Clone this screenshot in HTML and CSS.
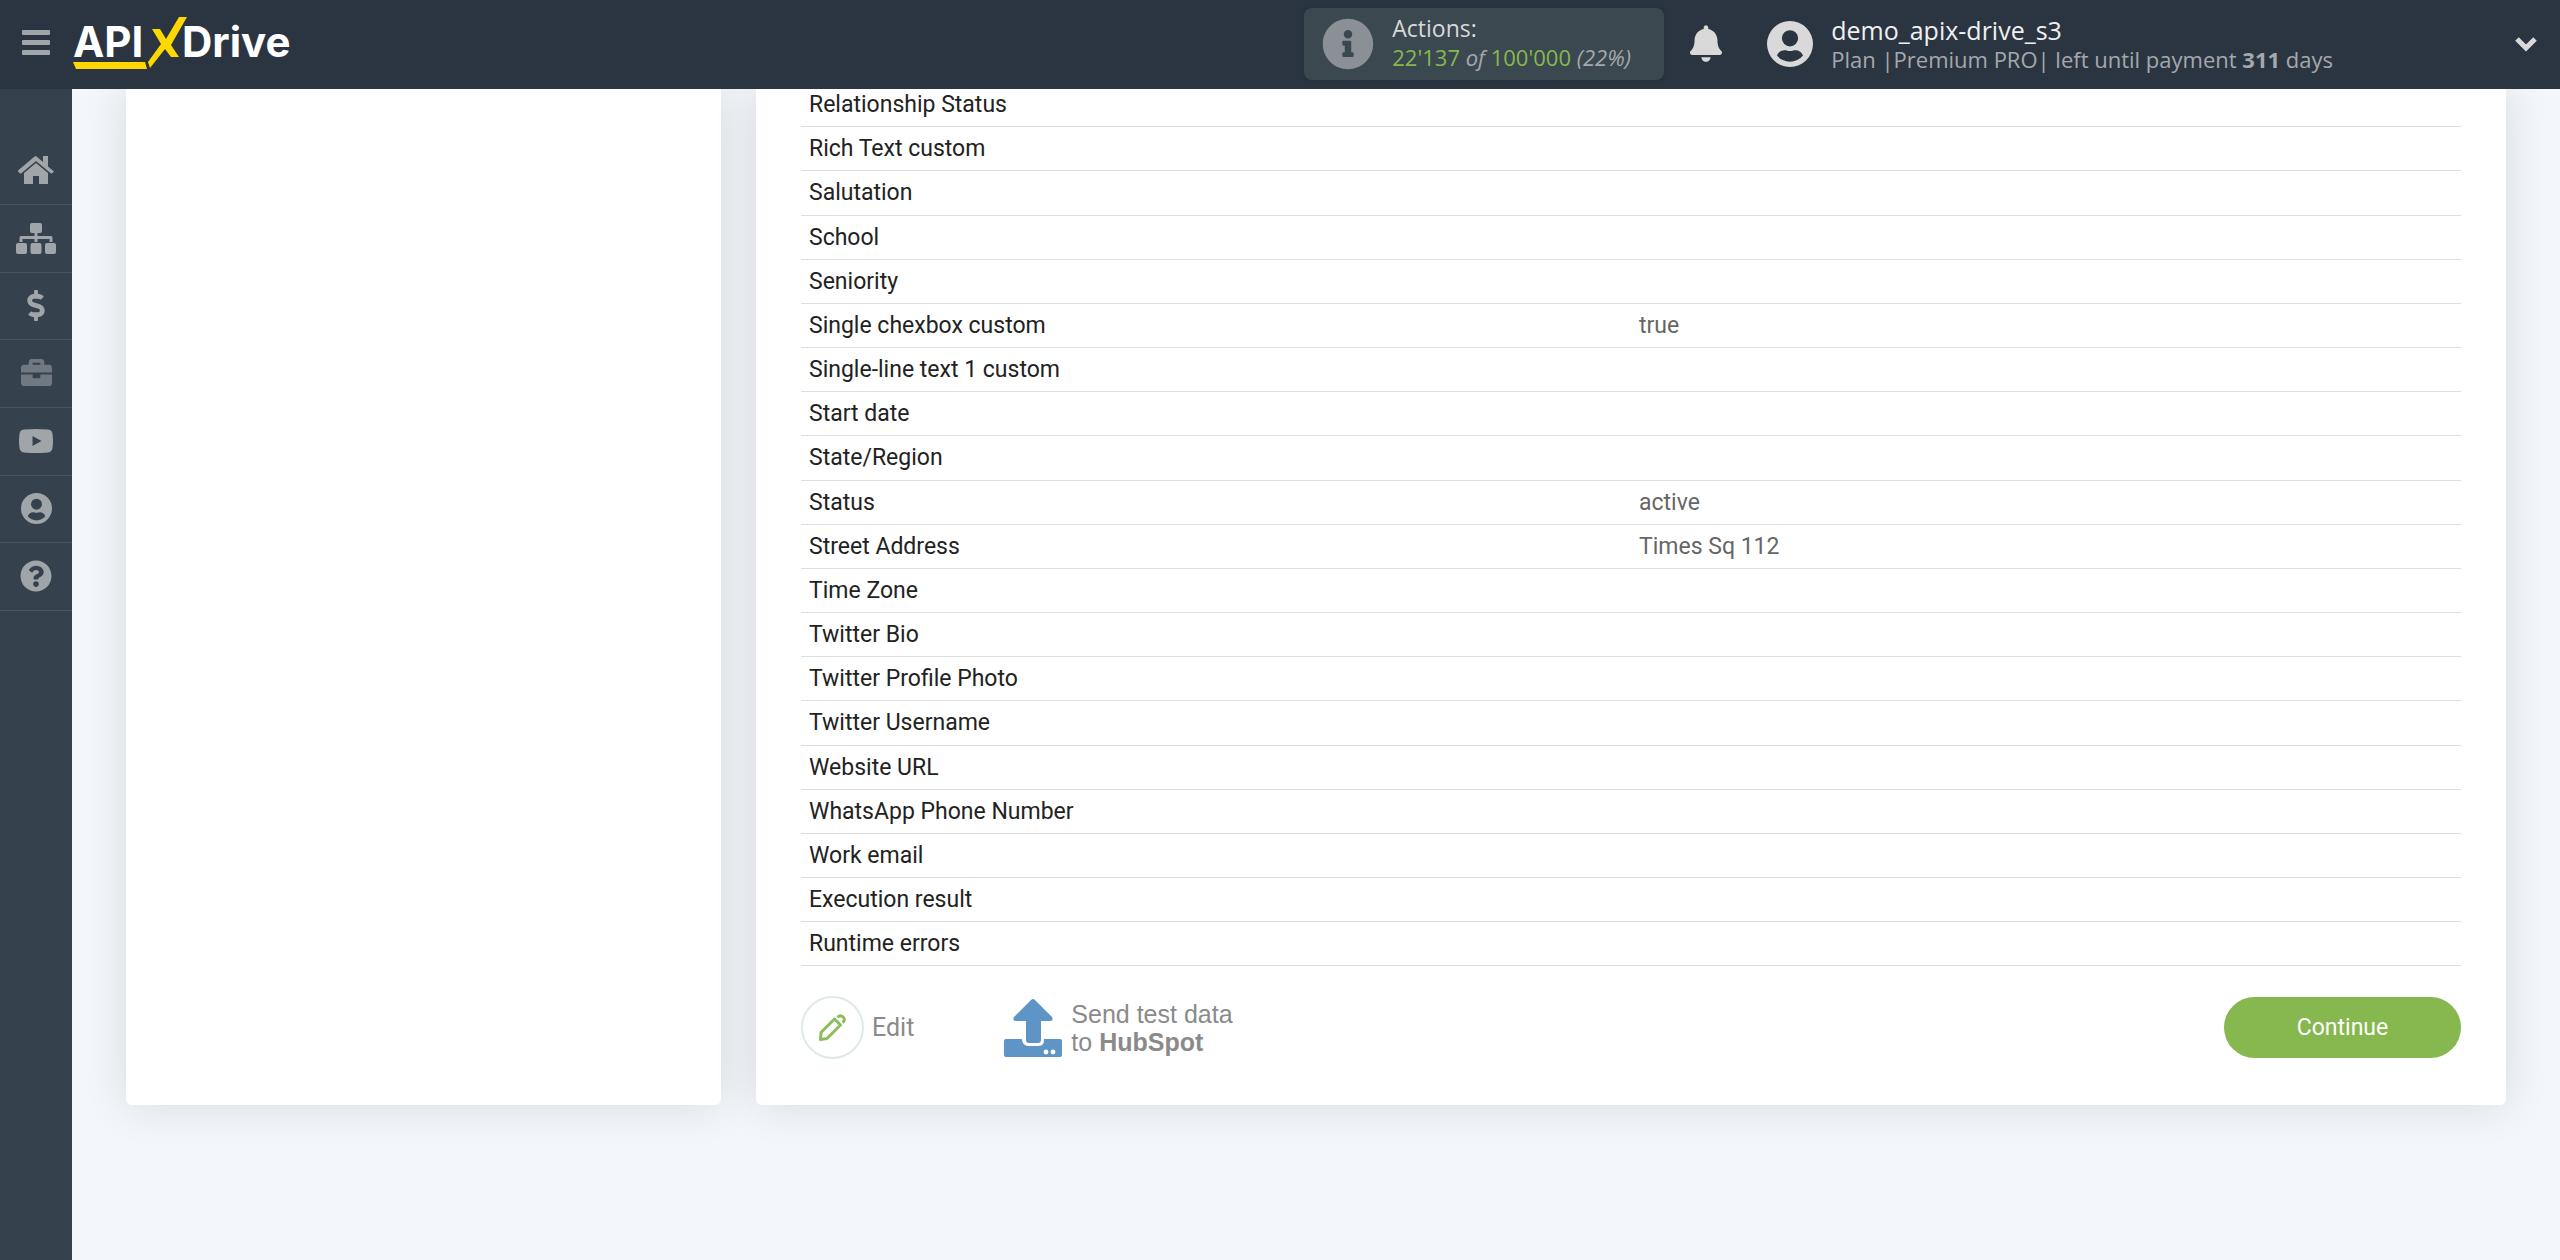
FILE: index.html
```html
<!DOCTYPE html>
<html lang="en">
<head>
<meta charset="utf-8">
<meta name="viewport" content="width=device-width, initial-scale=1">
<title>ApiX-Drive</title>
<link rel="stylesheet" href="styles.css">
</head>
<body>
<header class="topbar">
  <button class="icon-button menu-toggle" type="button" aria-label="Menu">
    <svg width="28" height="25" viewBox="0 0 28 25"><rect width="28" height="5" rx="1"/><rect y="10" width="28" height="5" rx="1"/><rect y="20" width="28" height="5" rx="1"/></svg>
  </button>
  <a class="logo" href="#" aria-label="APIXDrive">
    <svg width="224" height="56" viewBox="0 0 224 56">
      <text class="logo-text" x="0" y="43">API</text>
      <text class="logo-text" x="109" y="43">Drive</text>
      <path class="logo-accent" d="M0 48H72L74 55H3ZM79 15H87L93 25L106 3H114L98 31L106 43H98L92 35L77 54L75 48L88 30Z"/>
    </svg>
  </a>
  <section class="actions-box">
    <svg class="info-icon" width="52" height="52" viewBox="0 0 512 512"><path d="M256 8C119 8 8 119 8 256s111 248 248 248 248-111 248-248S393 8 256 8zm0 110c23.200 0 42 18.800 42 42s-18.800 42-42 42-42-18.800-42-42 18.800-42 42-42zm56 254c0 6.600-5.400 12-12 12h-88c-6.600 0-12-5.400-12-12v-24c0-6.600 5.400-12 12-12h12v-64h-12c-6.600 0-12-5.400-12-12v-24c0-6.600 5.400-12 12-12h64c6.600 0 12 5.400 12 12v100h12c6.600 0 12 5.400 12 12v24z"/></svg>
    <div class="actions-text">
      <div class="title">Actions:</div>
      <div class="detail"><span class="count">22'137</span> <em>of</em> <span class="count">100'000</span> <em>(22%)</em></div>
    </div>
  </section>
  <button class="icon-button bell" type="button" aria-label="Notifications">
    <svg width="32" height="37" viewBox="0 0 448 512"><path d="M224 512c35.320 0 63.970-28.650 63.970-64H160.030c0 35.350 28.650 64 63.970 64zm215.390-149.710c-19.320-20.760-55.470-51.990-55.470-154.290 0-77.700-54.480-139.900-127.940-155.160V32c0-17.670-14.320-32-31.980-32s-31.980 14.330-31.980 32v20.840C118.560 68.100 64.080 130.300 64.080 208c0 102.300-36.150 133.530-55.470 154.290-6 6.450-8.660 14.160-8.610 21.710.11 16.400 12.980 32 32.100 32h383.800c19.120 0 32-15.600 32.100-32 .05-7.550-2.610-15.270-8.610-21.710z"/></svg>
  </button>
  <a class="account" href="#">
    <svg width="46" height="46" viewBox="0 0 30 30"><path fill-rule="evenodd" d="M15 0a15 15 0 1 0 0 30a15 15 0 0 0 0-30ZM15 6a5.300 5.300 0 1 1 0 10.600a5.300 5.300 0 0 1 0-10.600ZM6.500 22.500C7.500 20 9.500 19 11.500 19C13 19 13.500 19.500 15 19.500S17 19 18.500 19C20.500 19 22.500 20 23.500 22.500A11 11 0 0 1 6.500 22.500Z"/></svg>
    <span class="account-text">
      <span class="title">demo_apix-drive_s3</span>
      <span class="detail">Plan |Premium PRO| left until payment <b>311</b> days</span>
    </span>
  </a>
  <button class="icon-button expand" type="button" aria-label="Expand">
    <svg width="24" height="16" viewBox="0 0 24 16"><path d="M3 3L12 12L21 3"/></svg>
  </button>
</header>
<div class="layout">
  <nav class="sidebar" aria-label="Main">
    <a href="#" aria-label="Home"><svg width="36" height="28" viewBox="0 0 36 28"><path d="M18 0L25 6V0H30V10.500L36 15.500L34 17.500L33 17.500L18 5L3 17.500H2L0 15.500L0 14.500L16 1Q18-.5 18 0ZM18 7L30 17V28H21V20H15V28H6V17Z"/></svg></a>
    <a href="#" aria-label="Connections"><svg width="40" height="32" viewBox="0 0 40 32"><rect x="14" y="1" width="12" height="10" rx="2"/><rect y="21" width="11" height="11" rx="2"/><rect x="14.500" y="21" width="11" height="11" rx="2"/><rect x="29" y="21" width="11" height="11" rx="2"/><path d="M18.500 10H21.500V14H35Q36.500 14 36.500 16V20H33.500V17H21.500V20H18.500V17H6.500V20H3.500V16Q3.500 14 5 14H18.500Z"/></svg></a>
    <a href="#" aria-label="Billing"><svg width="18" height="31" viewBox="0 0 288 512"><path d="M209.200 233.400l-108-31.600C88.700 198.200 80 186.500 80 173.500c0-16.300 13.200-29.500 29.500-29.500h66.300c12.200 0 24.200 3.700 34.200 10.500 6.100 4.100 14.300 3.100 19.500-2l34.800-34c7.100-6.900 6.100-18.400-1.800-24.500C238 74.800 207.400 64.100 176 64V16c0-8.800-7.200-16-16-16h-32c-8.800 0-16 7.200-16 16v48h-2.500C45.800 64-5.400 118.700.5 183.600c4.200 46.100 39.400 83.600 83.800 96.600l102.500 30c12.500 3.700 21.200 15.300 21.200 28.300 0 16.300-13.200 29.500-29.500 29.500h-66.300C100 368 88 364.300 78 357.500c-6.100-4.100-14.300-3.100-19.500 2l-34.800 34c-7.100 6.900-6.100 18.400 1.800 24.500 24.500 19.200 55.100 29.900 86.500 30v48c0 8.800 7.200 16 16 16h32c8.800 0 16-7.200 16-16v-48.200c46.600-.9 90.300-28.600 105.700-72.700 21.500-61.600-14.600-124.800-72.500-141.700z"/></svg></a>
    <a class="dim" href="#" aria-label="Projects"><svg width="31" height="31" viewBox="0 0 512 512"><path d="M320 336c0 8.840-7.160 16-16 16h-96c-8.840 0-16-7.160-16-16v-48H0v144c0 25.600 22.400 48 48 48h416c25.600 0 48-22.400 48-48V288H320v48zm144-208h-80V80c0-25.600-22.400-48-48-48H176c-25.600 0-48 22.400-48 48v48H48c-25.600 0-48 22.400-48 48v80h512v-80c0-25.600-22.400-48-48-48zm-144 0H192V96h128v32z"/></svg></a>
    <a href="#" aria-label="Videos"><svg width="34" height="24" viewBox="0 0 34 24"><path fill-rule="evenodd" d="M5 .6Q17-.6 29 .6Q33 1 33.500 5Q34.500 12 33.500 19Q33 23 29 23.400Q17 24.600 5 23.400Q1 23 .5 19Q-.5 12 .5 5Q1 1 5 .6ZM13.500 7V17L22.500 12Z"/></svg></a>
    <a href="#" aria-label="Profile"><svg width="31" height="31" viewBox="0 0 30 30"><path fill-rule="evenodd" d="M15 0a15 15 0 1 0 0 30a15 15 0 0 0 0-30ZM15 5.500a5.300 5.300 0 1 1 0 10.600a5.300 5.300 0 0 1 0-10.600ZM6.500 22.500C7.500 19.800 9.500 18.600 11.500 18.600C13 18.600 13.500 19.200 15 19.200S17 18.600 18.500 18.600C20.500 18.600 22.500 19.800 23.500 22.500A11 11 0 0 1 6.500 22.500Z"/></svg></a>
    <a href="#" aria-label="Help"><svg width="32" height="32" viewBox="0 0 512 512"><path d="M504 256c0 137-111 248-248 248S8 393 8 256C8 119 119 8 256 8s248 111 248 248zM262.655 90c-54.497 0-89.255 22.957-116.549 63.758-3.536 5.286-2.353 12.415 2.715 16.258l34.699 26.310c5.205 3.947 12.621 3.008 16.665-2.122 17.864-22.658 30.113-35.797 57.303-35.797 20.429 0 45.698 13.148 45.698 32.958 0 14.976-12.363 22.667-32.534 33.976C247.128 238.528 216 254.941 216 296v4c0 6.627 5.373 12 12 12h56c6.627 0 12-5.373 12-12v-1.333c0-28.462 83.186-29.647 83.186-106.667 0-58.002-60.165-102-116.531-102zM256 338c-25.365 0-46 20.635-46 46s20.635 46 46 46 46-20.636 46-46-20.635-46-46-46z"/></svg></a>
  </nav>
  <main class="content">
    <aside class="card"></aside>
    <section class="card details">
      <table class="fields">
        <tbody>
          <tr><th scope="row">Relationship Status</th><td></td></tr>
          <tr><th scope="row">Rich Text custom</th><td></td></tr>
          <tr><th scope="row">Salutation</th><td></td></tr>
          <tr><th scope="row">School</th><td></td></tr>
          <tr><th scope="row">Seniority</th><td></td></tr>
          <tr><th scope="row">Single chexbox custom</th><td>true</td></tr>
          <tr><th scope="row">Single-line text 1 custom</th><td></td></tr>
          <tr><th scope="row">Start date</th><td></td></tr>
          <tr><th scope="row">State/Region</th><td></td></tr>
          <tr><th scope="row">Status</th><td>active</td></tr>
          <tr><th scope="row">Street Address</th><td>Times Sq 112</td></tr>
          <tr><th scope="row">Time Zone</th><td></td></tr>
          <tr><th scope="row">Twitter Bio</th><td></td></tr>
          <tr><th scope="row">Twitter Profile Photo</th><td></td></tr>
          <tr><th scope="row">Twitter Username</th><td></td></tr>
          <tr><th scope="row">Website URL</th><td></td></tr>
          <tr><th scope="row">WhatsApp Phone Number</th><td></td></tr>
          <tr><th scope="row">Work email</th><td></td></tr>
          <tr><th scope="row">Execution result</th><td></td></tr>
          <tr><th scope="row">Runtime errors</th><td></td></tr>
        </tbody>
      </table>
      <div class="footer">
        <button class="link-button edit" type="button">
          <span class="edit-ring"><svg width="27" height="27" viewBox="0 0 27 27"><path d="M1.500 25.500L2 18.500L15.500 5L21.500 11L8 24.500ZM18.500 3.500Q21 .5 24 3Q27 6 23.500 8.500"/></svg></span>
          Edit
        </button>
        <button class="link-button send" type="button">
          <svg width="58" height="58" viewBox="0 0 58 58"><path d="M27 1Q29 -1 31 1L48 18Q50 22 46 22H37V41Q37 44 34 44H25Q22 44 22 41V22H12Q8 22 10 18ZM2 40H18V41Q19 47 25 47H34Q40 47 40 41V40H56Q58 40 58 42V56Q58 58 56 58H2Q0 58 0 56V42Q0 40 2 40Z"/><circle class="dot" cx="42" cy="53" r="2.400"/><circle class="dot" cx="49" cy="53" r="2.400"/></svg>
          <span>Send test data<br>to <b>HubSpot</b></span>
        </button>
        <button class="continue" type="button">Continue</button>
      </div>
    </section>
  </main>
</div>
</body>
</html>
```
FILE: styles.css
```css
* {
  box-sizing: border-box;
}

body {
  margin: 0;
  background: #f3f6fb;
  color: #222;
  font: 23px/28px Roboto, "Liberation Sans", sans-serif;
}

a {
  color: inherit;
  text-decoration: none;
}

button {
  border: 0;
  font: inherit;
  cursor: pointer;
}

svg {
  display: block;
  flex: none;
  fill: currentColor;
}

.icon-button,
.link-button {
  display: flex;
  align-items: center;
  padding: 0;
  background: none;
  color: inherit;
}

.topbar {
  position: sticky;
  top: 0;
  z-index: 2;
  display: flex;
  align-items: center;
  height: 89px;
  padding: 0 22px 2px;
  background: #2b3542;
  color: #d9d9d9;
  font-family: "Open Sans", "Noto Sans", sans-serif;
}

.menu-toggle {
  margin-right: 23px;
  padding-bottom: 2px;
  color: #a0a5a9;
}

.logo {
  margin: 0 auto 3px 0;
}

.logo-text {
  fill: #fff;
  font: 700 42px Inter, sans-serif;
}

.logo-accent {
  fill: #ffd800;
}

.actions-box {
  display: flex;
  align-items: center;
  gap: 18px;
  width: 360px;
  height: 72px;
  margin-right: 26px;
  padding: 0 18px;
  border-radius: 8px;
  background: #3b4850;
  box-shadow: 0 0 6px rgba(0, 0, 0, .15);
}

.actions-text {
  padding-bottom: 4px;
}

.info-icon {
  color: #8a9096;
}

.title,
.detail {
  display: block;
  white-space: nowrap;
}

.title {
  font-size: 23px;
  line-height: 30px;
}

.detail {
  color: #a5a8ac;
  font-size: 22px;
  line-height: 28px;
}

.count {
  color: #86b84f;
}

.bell {
  margin-right: 45px;
}

.account {
  display: flex;
  align-items: center;
  gap: 18px;
  margin-right: 181px;
}

.account .title {
  color: #f0f0f0;
  font-size: 25px;
}

.expand path {
  fill: none;
  stroke: currentColor;
  stroke-width: 5;
}

.layout {
  display: flex;
  min-height: calc(100vh - 89px);
}

.sidebar {
  flex: none;
  width: 72px;
  padding-top: 48px;
  background: #36414e;
  color: #a0a5a9;
}

.sidebar a {
  display: flex;
  align-items: center;
  justify-content: center;
  height: 68px;
  padding-bottom: 2px;
  border-bottom: 1px solid #4a5562;
}

.sidebar a:nth-child(3n) {
  height: 67px;
}

.sidebar .dim {
  color: #707882;
}

.content {
  flex: 1;
  display: grid;
  grid-template-columns: 25% 1fr;
  gap: 35px;
  align-items: stretch;
  align-self: flex-start;
  padding: 0 54px;
}

.card {
  border-radius: 0 0 6px 6px;
  background: #fff;
  box-shadow: 0 0 45px rgba(0, 0, 0, .12);
}

.details {
  padding: 0 45px 46px;
}

.fields {
  width: 100%;
  margin-top: -6px;
  border-collapse: separate;
  border-spacing: 0;
  table-layout: fixed;
}

.fields tr {
  height: 44px;
}

.fields tr:nth-child(6n + 3) {
  height: 45px;
}

.fields th,
.fields td {
  padding: 0 8px;
  border-bottom: 1px solid #dedede;
  font-weight: 400;
  text-align: left;
}

.fields td {
  color: #666;
}

.footer {
  display: flex;
  align-items: center;
  padding-top: 30px;
  color: #8a8a8a;
  font-size: 25px;
}

.edit {
  gap: 8px;
  margin-right: 90px;
}

.edit-ring {
  display: grid;
  place-items: center;
  width: 63px;
  height: 63px;
  border: 2px solid #e0e9e9;
  border-radius: 50%;
}

.edit-ring path {
  fill: none;
  stroke: #8bbd5a;
  stroke-width: 3;
  stroke-linejoin: round;
}

.send {
  gap: 9px;
  font-family: "Liberation Sans", Arial, sans-serif;
  text-align: left;
}

.send svg {
  color: #5e94c6;
}

.send .dot {
  fill: #fff;
}

.continue {
  width: 237px;
  height: 61px;
  margin-left: auto;
  border-radius: 31px;
  background: #86b84f;
  color: #fff;
  font-size: 23px;
}
```
